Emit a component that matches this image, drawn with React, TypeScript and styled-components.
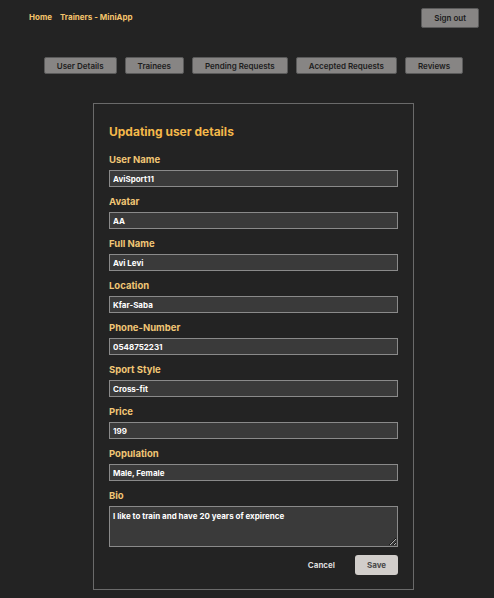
import React from "react";
import styled, { createGlobalStyle } from "styled-components";

const Global = createGlobalStyle`
  html, body { margin: 0; padding: 0; background: #232323; }
  body { font-family: Inter, "Noto Sans", sans-serif; }
  * { box-sizing: border-box; }
`;

const Page = styled.div`
  min-height: 598px;
  background: #232323;
  display: flex;
  flex-direction: column;
`;

const TopBar = styled.header`
  display: flex;
  align-items: flex-start;
  justify-content: space-between;
  padding: 8px 15px 0 29px;
  height: 57px;
`;

const Brand = styled.nav`
  display: flex;
  gap: 8px;
  padding-top: 3px;
`;

const BrandLink = styled.a`
  font-size: 8px;
  font-weight: 700;
  color: #f4c46c;
  text-decoration: none;
  line-height: 12px;
`;

const GrayButton = styled.button<{ $h?: number }>`
  font-family: inherit;
  font-weight: 600;
  font-size: 8px;
  color: #1c1c1c;
  background: #878584;
  border: 1px solid #5a5a5a;
  border-radius: 2px;
  padding: 0 12px;
  height: ${(p) => p.$h ?? 17}px;
  cursor: pointer;
`;

const Tabs = styled.div`
  display: flex;
  justify-content: center;
  gap: 8px;
  padding-left: 13px;
`;

const Main = styled.main`
  display: flex;
  justify-content: center;
  padding: 29px 0 0 13px;
`;

const Card = styled.form`
  width: 321px;
  border: 1px solid #6a6a6a;
  padding: 20px 15px 14px 15px;
  display: flex;
  flex-direction: column;
`;

const Title = styled.h2`
  margin: 0 0 14px;
  font-size: 12px;
  line-height: 16px;
  font-weight: 700;
  color: #f4b84a;
`;

const Field = styled.div`
  display: flex;
  flex-direction: column;
  gap: 4px;
  margin-bottom: 9px;
`;

const Label = styled.label`
  font-size: 9.5px;
  line-height: 12px;
  font-weight: 700;
  color: #f1c675;
`;

const Input = styled.input`
  height: 17px;
  width: 100%;
  background: #3a3a3a;
  border: 1px solid #8a8a8a;
  color: #ffffff;
  font-family: inherit;
  font-weight: 700;
  font-size: 8px;
  padding: 0 3px;
  outline: none;
`;

const TextArea = styled.textarea`
  height: 41px;
  width: 100%;
  background: #3a3a3a;
  border: 1px solid #8a8a8a;
  color: #ffffff;
  font-family: inherit;
  font-weight: 700;
  font-size: 8px;
  padding: 4px 3px;
  resize: vertical;
  outline: none;
`;

const Actions = styled.div`
  display: flex;
  justify-content: flex-end;
  align-items: center;
  gap: 20px;
  margin-top: -1px;
`;

const TextButton = styled.button`
  background: none;
  border: none;
  padding: 0;
  font-family: inherit;
  font-weight: 700;
  font-size: 8px;
  color: #dcdcdc;
  cursor: pointer;
`;

const SaveButton = styled.button`
  background: #d2cecb;
  border: none;
  border-radius: 3px;
  font-family: inherit;
  font-weight: 700;
  font-size: 8px;
  color: #4a4a4a;
  width: 43px;
  height: 20px;
  cursor: pointer;
`;

const fields: [string, string][] = [
  ["User Name", "AviSport11"],
  ["Avatar", "AA"],
  ["Full Name", "Avi Levi"],
  ["Location", "Kfar-Saba"],
  ["Phone-Number", "0548752231"],
  ["Sport Style", "Cross-fit"],
  ["Price", "199"],
  ["Population", "Male, Female"],
];

export default function App() {
  return (
    <Page>
      <Global />
      <TopBar>
        <Brand>
          <BrandLink href="#">Home</BrandLink>
          <BrandLink href="#">Trainers - MiniApp</BrandLink>
        </Brand>
        <GrayButton $h={20}>Sign out</GrayButton>
      </TopBar>
      <Tabs>
        {["User Details", "Trainees", "Pending Requests", "Accepted Requests", "Reviews"].map((t) => (
          <GrayButton key={t}>{t}</GrayButton>
        ))}
      </Tabs>
      <Main>
        <Card onSubmit={(e) => e.preventDefault()}>
          <Title>Updating user details</Title>
          {fields.map(([l, v]) => (
            <Field key={l}>
              <Label>{l}</Label>
              <Input defaultValue={v} />
            </Field>
          ))}
          <Field>
            <Label>Bio</Label>
            <TextArea defaultValue="I like to train and have 20 years of expirence" />
          </Field>
          <Actions>
            <TextButton type="button">Cancel</TextButton>
            <SaveButton type="submit">Save</SaveButton>
          </Actions>
        </Card>
      </Main>
    </Page>
  );
}
